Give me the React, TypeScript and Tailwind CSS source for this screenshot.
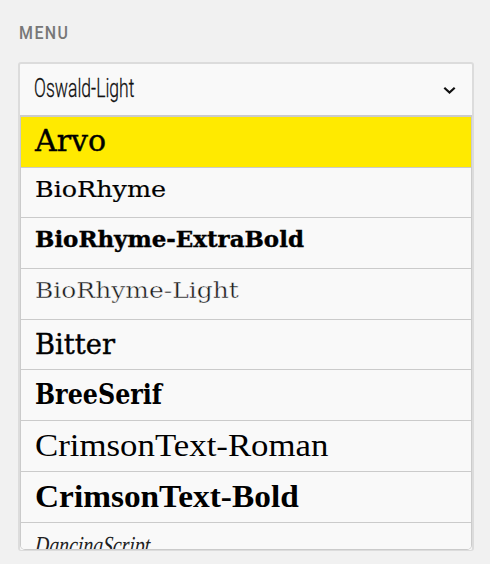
type Option = { name: string; style: string };

const options: Option[] = [
  { name: "Arvo", style: "font-['DejaVu_Serif',serif] text-[30px] mt-[6px] scale-x-[1] [-webkit-text-stroke:0.4px_#000]" },
  { name: "BioRhyme", style: "font-['DejaVu_Serif',serif] text-[23px] mt-[3px] scale-x-[1.105] [-webkit-text-stroke:0.2px_#111]" },
  { name: "BioRhyme-ExtraBold", style: "font-['DejaVu_Serif',serif] font-bold text-[23px] mt-[3px] scale-x-[0.997] [-webkit-text-stroke:0.4px_#000]" },
  { name: "BioRhyme-Light", style: "font-['DejaVu_Serif',serif] text-[23px] mt-[3px] scale-x-[1.085] text-[#1c1c1c] [-webkit-text-stroke:0.4px_#f9f9f9]" },
  { name: "Bitter", style: "font-['DejaVu_Serif',serif] text-[28px] mt-[7px] scale-x-[0.975] [-webkit-text-stroke:0.4px_#000]" },
  { name: "BreeSerif", style: "font-['DejaVu_Serif',serif] font-bold text-[28px] mt-[7px] scale-x-[0.85]" },
  { name: "CrimsonText-Roman", style: "font-['Liberation_Serif',serif] text-[32px] mt-[6px] scale-x-[1.088]" },
  { name: "CrimsonText-Bold", style: "font-['Liberation_Serif',serif] font-bold text-[32px] mt-[6px] scale-x-[1.042]" },
  { name: "DancingScript", style: "font-['Liberation_Serif',serif] italic text-[26px] mt-[5px] scale-x-[0.76] -skew-x-6 text-[#222]" },
];

export default function App() {
  return (
    <main className="h-[564px] w-[490px] overflow-hidden bg-[#f1f1f1] pl-[18px] pt-[22px] text-black">
      <div className="pl-px font-[Roboto,sans-serif] text-[17.5px] font-medium leading-[22px] tracking-[1.6px] text-[#777]">
        <span className="inline-block origin-left scale-x-[0.91]">MENU</span>
      </div>
      <div className="mt-[18px] h-[489px] w-[456px] overflow-hidden rounded-[3px] border-2 border-b border-[#dcdcdc] bg-[#f9f9f9]">
        <button className="flex h-[51px] w-full items-center justify-between pl-[14px] pr-[16px]">
          <span className="-mt-[4px] origin-left scale-x-[0.675] whitespace-nowrap font-[Roboto,sans-serif] text-[26px] font-light leading-none text-[#111] [-webkit-text-stroke:0.3px_#111]">
            Oswald-Light
          </span>
          <svg className="mt-[1px] h-[9px] w-[13px]" viewBox="0 0 13 9" fill="none" stroke="#111" strokeWidth="2.2">
            <path d="M1.3 1.7 6.5 6.6 11.7 1.7" />
          </svg>
        </button>
        <ul className="h-[435px] overflow-hidden rounded-b-[5px] border border-t-2 border-[#cbcbcb]">
          {options.map((option, index) => (
            <li
              key={option.name}
              className={`flex h-[50.7px] items-start border-b-[1.5px] border-[#cbcbcb] pl-[14px] ${index === 0 ? "bg-[#ffea00]" : "bg-[#f9f9f9]"}`}
            >
              <span className={`origin-left whitespace-nowrap leading-[36px] ${option.style}`}>{option.name}</span>
            </li>
          ))}
        </ul>
      </div>
    </main>
  );
}
